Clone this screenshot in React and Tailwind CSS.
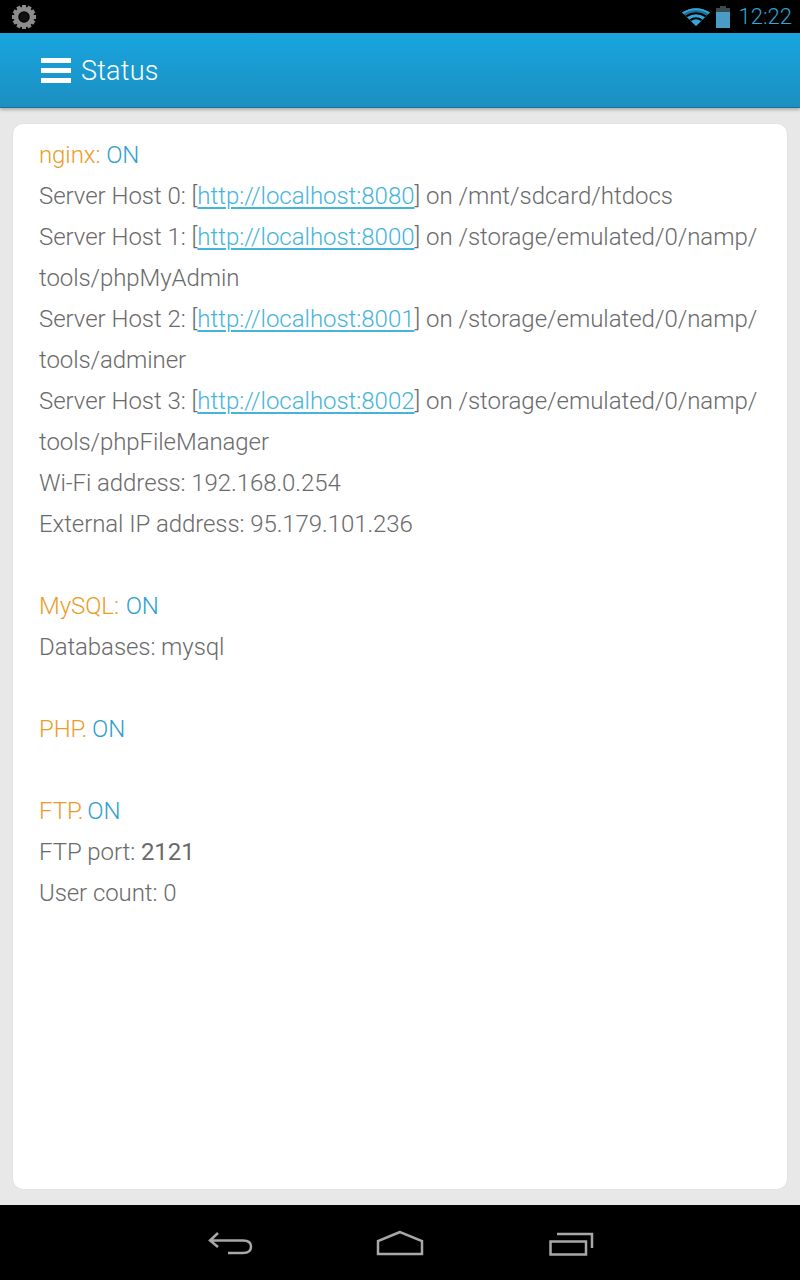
const ORANGE = 'text-[#eb9c28]'
const BLUE = 'text-[#2f9fd0]'

function Link({ children }) {
  return <span className="text-[#45b4dc] underline decoration-[2px] underline-offset-[3px]">{children}</span>
}

function Gear() {
  const teeth = Array.from({ length: 12 }).map((_, i) => i * 30)
  return (
    <svg width="26" height="26" viewBox="0 0 26 26">
      {teeth.map((a) => (
        <rect key={a} x="11" y="1" width="4" height="5" fill="#8c8c8c" transform={`rotate(${a} 13 13)`} />
      ))}
      <circle cx="13" cy="13" r="8" fill="none" stroke="#8c8c8c" strokeWidth="4.5" />
      <circle cx="13" cy="13" r="4.5" fill="#111" />
    </svg>
  )
}

function Wifi() {
  return (
    <svg width="28" height="20" viewBox="0 0 28 20">
      <path d="M14 19 L0 5.500 Q14 -3 28 5.500 Z" fill="#1f6f94" />
      <path d="M14 19 L5 10 Q14 3.500 23 10 Z" fill="#33a5d6" />
      <path d="M0 5.500 Q14 -3 28 5.500 L26.500 7 Q14 -1 1.500 7 Z" fill="#33a5d6" />
      <path d="M3.500 8.500 Q14 2 24.500 8.500 L23 10 Q14 4.500 5 10 Z" fill="#000" />
      <path d="M7.500 12.500 Q14 8 20.500 12.500 L19 14 Q14 10.500 9 14 Z" fill="#000" />
    </svg>
  )
}

function Battery() {
  return (
    <svg width="16" height="22" viewBox="0 0 16 22">
      <rect x="5" y="0" width="6" height="3" fill="#3a4a50" />
      <rect x="1" y="2" width="14" height="5" fill="#3a4a50" />
      <rect x="1" y="6" width="14" height="16" fill="#4b9cc4" />
    </svg>
  )
}

function Line({ children, className = 'tracking-[-0.08px]' }) {
  return <div className={`h-[41px] leading-[41px] whitespace-nowrap ${className}`}>{children}</div>
}

function Host({ n, url, children }) {
  return (
    <Line className="tracking-[-0.03px]">
      Server Host {n}: [<Link>{url}</Link>] on {children}
    </Line>
  )
}

function Title({ name, sep = ':', gap = 'ml-0' }) {
  return (
    <Line>
      <span className={ORANGE}>{name}{sep}</span> <span className={`${BLUE} ${gap}`}>ON</span>
    </Line>
  )
}

export default function App() {
  return (
    <div className="flex h-[1280px] w-[800px] flex-col bg-[#e8e8e8] font-['Roboto',sans-serif]">
      <div className="flex h-[33px] items-center justify-between bg-black pl-[11px] pr-[8px]">
        <Gear />
        <div className="flex items-center">
          <Wifi />
          <div className="ml-[5px] mr-[8px]"><Battery /></div>
          <span className="text-[22px] font-light leading-none text-[#33a5d6]">12:22</span>
        </div>
      </div>

      <div className="flex h-[75px] items-center gap-[10px] border-b border-[#1a6f99] bg-gradient-to-b from-[#18a5de] to-[#1b8fc2] pl-[41px] pt-[3px] shadow-[0_2px_3px_rgba(0,0,0,0.25)]">
        <div className="mb-[3px] flex w-[30px] flex-col gap-[5px]">
          <div className="h-[5px] bg-white" />
          <div className="h-[5px] bg-white" />
          <div className="h-[5px] bg-white" />
        </div>
        <span className="text-[27px] font-light tracking-[0.2px] text-white">Status</span>
      </div>

      <div className="flex-1 px-[13px] pb-[16px] pt-[16px]">
        <div className="h-full rounded-[10px] bg-white pl-[26px] pt-[11px] text-[24px] font-light text-[#6a6a6a] shadow-[0_0_2px_rgba(0,0,0,0.08)]">
          <Title name="nginx" />
          <Host n={0} url="http://localhost:8080">/mnt/sdcard/htdocs</Host>
          <Host n={1} url="http://localhost:8000">/storage/emulated/0/namp/</Host>
          <Line>tools/phpMyAdmin</Line>
          <Host n={2} url="http://localhost:8001">/storage/emulated/0/namp/</Host>
          <Line>tools/adminer</Line>
          <Host n={3} url="http://localhost:8002">/storage/emulated/0/namp/</Host>
          <Line>tools/phpFileManager</Line>
          <Line>Wi-Fi address: 192.168.0.254</Line>
          <Line>External IP address: 95.179.101.236</Line>
          <Line />
          <Title name="MySQL" gap="ml-[1px]" />
          <Line>Databases: mysql</Line>
          <Line />
          <Title name="PHP" sep="." gap="ml-[-1px]" />
          <Line />
          <Title name="FTP" sep="." gap="ml-[-2px]" />
          <Line>FTP port: <span className="font-normal">2121</span></Line>
          <Line>User count: 0</Line>
        </div>
      </div>

      <div className="flex h-[75px] items-center justify-center gap-[125px] bg-black pt-[3px]">
        <svg width="46" height="26" viewBox="0 0 46 26" fill="none" stroke="#a8a8a8" strokeWidth="2.500" className="ml-[2px] mr-[-2px]">
          <path d="M11 2 L3 9.500 L11 16 M3 9.500 H36 Q44 9.500 44 15.500 Q44 22 36 22 H21" />
        </svg>
        <svg width="48" height="26" viewBox="0 0 48 26" fill="none" stroke="#a8a8a8" strokeWidth="2.500" className="mt-[-2px]">
          <path d="M24 2 L2 11 V24 H46 V11 Z" />
        </svg>
        <svg width="46" height="24" viewBox="0 0 46 24" fill="none" stroke="#a8a8a8" strokeWidth="2.500">
          <path d="M1.500 9.500 H37 V22.500 H1.500 Z M8 2 H43 V16" />
        </svg>
      </div>
    </div>
  )
}
